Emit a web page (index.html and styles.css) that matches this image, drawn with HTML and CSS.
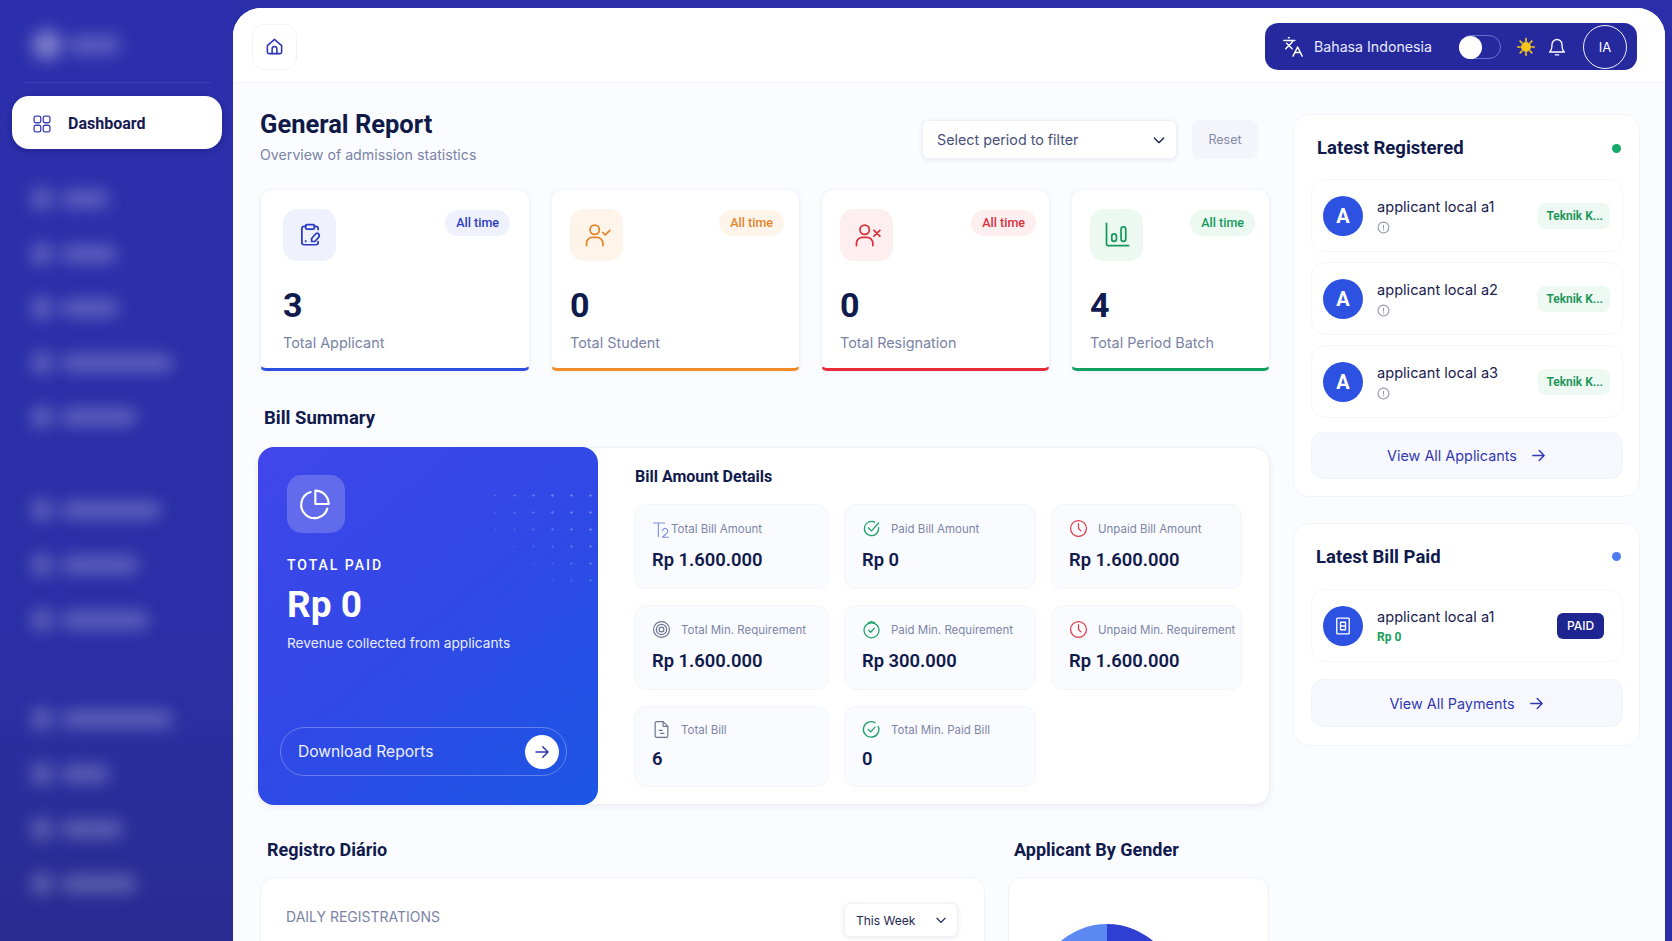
FILE: index.html
```html
<!DOCTYPE html>
<html lang="en">
<head>
<meta charset="utf-8">
<title>Dashboard</title>
<link rel="stylesheet" href="styles.css">
</head>
<body>
<svg class="sprite" aria-hidden="true">
  <symbol id="i-arrow" viewBox="0 0 24 24"><path d="M4 12h16M13 5l7 7-7 7"/></symbol>
  <symbol id="i-chev" viewBox="0 0 24 24"><path d="m5 9 7 7 7-7"/></symbol>
  <symbol id="i-info" viewBox="0 0 24 24"><circle cx="12" cy="12" r="10"/><path d="M12 8v5M12 16v.5"/></symbol>
  <symbol id="i-check" viewBox="0 0 24 24"><path d="M21 11v1a9 9 0 1 1-5-8"/><path d="m8 11 4 4 9-10"/></symbol>
  <symbol id="i-clock" viewBox="0 0 24 24"><circle cx="12" cy="12" r="10"/><path d="M12 6v6l3 3"/></symbol>
  <symbol id="i-badge" viewBox="0 0 24 24"><circle cx="12" cy="13" r="9.500"/><path d="M8 3.500 12 2l4 1.500"/><path d="m8.500 13 2.500 2.500 4.500-5"/></symbol>
  <symbol id="i-round" viewBox="0 0 24 24"><path d="M20.500 8a9.800 9.800 0 1 1-4-4.500"/><path d="m8 12 3 3 5.500-6"/></symbol>
</svg>

<aside class="sidebar">
  <div class="brand"><i class="blob blob-logo"></i><i class="blob blob-brandtext"></i></div>
  <div class="side-rule"></div>
  <a class="side-active">
    <svg class="ico-20" viewBox="0 0 24 24"><rect x="2.500" y="2.500" width="8" height="8" rx="2"/><rect x="13.500" y="2.500" width="8" height="8" rx="2"/><rect x="2.500" y="13.500" width="8" height="8" rx="2"/><rect x="13.500" y="13.500" width="8" height="8" rx="2"/></svg>
    <span>Dashboard</span>
  </a>
  <nav class="side-group first">
    <div class="side-item"><i class="blob blob-ic"></i><i class="blob b-w48"></i></div>
    <div class="side-item"><i class="blob blob-ic"></i><i class="blob b-w60"></i></div>
    <div class="side-item"><i class="blob blob-ic"></i><i class="blob b-w62"></i></div>
    <div class="side-item"><i class="blob blob-ic"></i><i class="blob b-w118"></i></div>
    <div class="side-item"><i class="blob blob-ic"></i><i class="blob b-w80"></i></div>
  </nav>
  <nav class="side-group second">
    <div class="side-item"><i class="blob blob-ic"></i><i class="blob b-w104"></i></div>
    <div class="side-item"><i class="blob blob-ic"></i><i class="blob b-w84"></i></div>
    <div class="side-item"><i class="blob blob-ic"></i><i class="blob b-w94"></i></div>
  </nav>
  <nav class="side-group third">
    <div class="side-item"><i class="blob blob-ic"></i><i class="blob b-w118"></i></div>
    <div class="side-item"><i class="blob blob-ic"></i><i class="blob b-w48"></i></div>
    <div class="side-item"><i class="blob blob-ic"></i><i class="blob b-w66"></i></div>
    <div class="side-item"><i class="blob blob-ic"></i><i class="blob b-w80"></i></div>
  </nav>
</aside>

<main class="main">
  <header class="topbar">
    <button class="home-btn" aria-label="Home">
      <svg class="ico-19 stroke-indigo" viewBox="0 0 24 24"><path d="M3 11 12 3l9 8v8a2 2 0 0 1-2 2H5a2 2 0 0 1-2-2z"/><path d="M9 21v-6a3 3 0 0 1 6 0v6"/></svg>
    </button>
    <div class="top-actions">
      <svg class="ico-22 stroke-white" viewBox="0 0 24 24"><path d="m5 8 6 6M4 14l6-6 2-3M2 5h12M7 2h1M22 22l-5-10-5 10M14 18h6"/></svg>
      <span class="lang">Bahasa Indonesia</span>
      <span class="toggle"><i class="knob"></i></span>
      <svg class="ico-20 sun" viewBox="0 0 24 24"><circle cx="12" cy="12" r="5"/><path d="M12 2v3M12 19v3M2 12h3M19 12h3M5 5l2 2M17 17l2 2M5 19l2-2M17 7l2-2"/></svg>
      <svg class="ico-20 stroke-white bell" viewBox="0 0 24 24"><path d="M6 9a6 6 0 0 1 12 0c0 7 3 9 3 9H3s3-2 3-9"/><path d="M10 21.500h4"/></svg>
      <span class="avatar-ring">IA</span>
    </div>
  </header>

  <div class="content">
    <div class="col-left">
      <div class="report-head">
        <div>
          <h1 class="report-title">General Report</h1>
          <p class="report-sub">Overview of admission statistics</p>
        </div>
        <div class="filters">
          <div class="select-period"><span>Select period to filter</span><svg class="ico-16 stroke-dark" viewBox="0 0 24 24"><use href="#i-chev"/></svg></div>
          <button class="reset">Reset</button>
        </div>
      </div>

      <section class="stats">
        <article class="stat stat-wide stat-blue">
          <div class="stat-top">
            <span class="stat-ico"><svg class="ico-26" viewBox="0 0 24 24"><path d="M16 4h1.500a2 2 0 0 1 2 2v1M8 4H6.500a2 2 0 0 0-2 2v13a2 2 0 0 0 2 2h11a2 2 0 0 0 2-2v-1"/><rect x="8" y="2.500" width="8" height="4" rx="1"/><path d="M19.500 10.500c1.200 1 1.200 2.700.2 4l-3.200 3.500h-3v-2.800l3.200-3.700c.8-1 1.900-1.600 2.800-1z"/><path d="M8 17.500v.5"/></svg></span>
            <span class="badge">All time</span>
          </div>
          <div class="stat-value">3</div>
          <div class="stat-label">Total Applicant</div>
        </article>
        <article class="stat stat-orange">
          <div class="stat-top">
            <span class="stat-ico"><svg class="ico-28" viewBox="0 0 24 24"><circle cx="10" cy="7.500" r="4"/><path d="M3 21v-2a5 5 0 0 1 5-5h4a5 5 0 0 1 5 5v2"/><path d="m17 10 2 2 4-4"/></svg></span>
            <span class="badge">All time</span>
          </div>
          <div class="stat-value">0</div>
          <div class="stat-label">Total Student</div>
        </article>
        <article class="stat stat-red">
          <div class="stat-top">
            <span class="stat-ico"><svg class="ico-28" viewBox="0 0 24 24"><circle cx="10" cy="7.500" r="4"/><path d="M3 21v-2a5 5 0 0 1 5-5h4a5 5 0 0 1 5 5v2"/><path d="m18 8 5 5M23 8l-5 5"/></svg></span>
            <span class="badge">All time</span>
          </div>
          <div class="stat-value">0</div>
          <div class="stat-label">Total Resignation</div>
        </article>
        <article class="stat stat-green">
          <div class="stat-top">
            <span class="stat-ico"><svg class="ico-28" viewBox="0 0 24 24"><path d="M3 2v18a1 1 0 0 0 1 1h18"/><rect x="7.500" y="11" width="4" height="6.500" rx="2"/><rect x="15.500" y="5" width="4" height="12.500" rx="2"/></svg></span>
            <span class="badge">All time</span>
          </div>
          <div class="stat-value">4</div>
          <div class="stat-label">Total Period Batch</div>
        </article>
      </section>

      <h2 class="section-title bill-title">Bill Summary</h2>
      <section class="bill-panel">
        <div class="paid-card">
          <div class="dots"></div>
          <span class="paid-ico"><svg class="ico-32 stroke-white" viewBox="0 0 24 24"><path d="M20.500 15.500A10 10 0 1 1 8 3"/><path d="M21.500 12A10 10 0 0 0 11.500 2v10z"/></svg></span>
          <div class="paid-label">TOTAL PAID</div>
          <div class="paid-value">Rp 0</div>
          <div class="paid-desc">Revenue collected from applicants</div>
          <div class="download">
            <span>Download Reports</span>
            <span class="download-arrow"><svg class="ico-18 stroke-indigo" viewBox="0 0 24 24"><use href="#i-arrow"/></svg></span>
          </div>
        </div>
        <div class="details">
          <h3 class="details-title">Bill Amount Details</h3>
          <div class="tiles">
            <div class="tile">
              <div class="tile-head tight"><svg class="ico-18 stroke-periwinkle" viewBox="0 0 24 24"><path d="M2 4h15M8.500 4v18"/><path d="M14 14.500a3.500 3.500 0 1 1 6.500 2L14 23h8"/></svg><span>Total Bill Amount</span></div>
              <div class="tile-value">Rp 1.600.000</div>
            </div>
            <div class="tile">
              <div class="tile-head"><svg class="ico-19 stroke-green" viewBox="0 0 24 24"><use href="#i-check"/></svg><span>Paid Bill Amount</span></div>
              <div class="tile-value">Rp 0</div>
            </div>
            <div class="tile">
              <div class="tile-head"><svg class="ico-19 stroke-red" viewBox="0 0 24 24"><use href="#i-clock"/></svg><span>Unpaid Bill Amount</span></div>
              <div class="tile-value">Rp 1.600.000</div>
            </div>
            <div class="tile">
              <div class="tile-head"><svg class="ico-19 stroke-slate" viewBox="0 0 24 24"><circle cx="12" cy="12" r="10"/><circle cx="12" cy="12" r="6.500"/><circle cx="12" cy="12" r="3"/></svg><span>Total Min. Requirement</span></div>
              <div class="tile-value">Rp 1.600.000</div>
            </div>
            <div class="tile">
              <div class="tile-head"><svg class="ico-19 stroke-green" viewBox="0 0 24 24"><use href="#i-badge"/></svg><span>Paid Min. Requirement</span></div>
              <div class="tile-value">Rp 300.000</div>
            </div>
            <div class="tile">
              <div class="tile-head"><svg class="ico-19 stroke-red" viewBox="0 0 24 24"><use href="#i-clock"/></svg><span>Unpaid Min. Requirement</span></div>
              <div class="tile-value">Rp 1.600.000</div>
            </div>
            <div class="tile tile-short">
              <div class="tile-head"><svg class="ico-19 stroke-slate" viewBox="0 0 24 24"><path d="M14 2H6a2 2 0 0 0-2 2v16a2 2 0 0 0 2 2h12a2 2 0 0 0 2-2V8z"/><path d="M14 2v6h6M9 13h4M11 17h4"/></svg><span>Total Bill</span></div>
              <div class="tile-value">6</div>
            </div>
            <div class="tile tile-short">
              <div class="tile-head"><svg class="ico-19 stroke-green" viewBox="0 0 24 24"><use href="#i-round"/></svg><span>Total Min. Paid Bill</span></div>
              <div class="tile-value">0</div>
            </div>
          </div>
        </div>
      </section>

      <div class="charts">
        <div>
          <h2 class="section-title chart-title-a">Registro Diário</h2>
          <div class="chart-card">
            <div class="chart-head">
              <span class="chart-label">DAILY REGISTRATIONS</span>
              <div class="select-week"><span>This Week</span><svg class="ico-14 stroke-dark" viewBox="0 0 24 24"><use href="#i-chev"/></svg></div>
            </div>
          </div>
        </div>
        <div>
          <h2 class="section-title chart-title-b">Applicant By Gender</h2>
          <div class="chart-card pie-card"><div class="pie"></div></div>
        </div>
      </div>
    </div>

    <aside class="col-right">
      <section class="side-card card-registered">
        <div class="side-card-head"><h2 class="side-card-title">Latest Registered</h2><i class="dot dot-green"></i></div>
        <div class="rows">
          <div class="row">
            <span class="row-avatar">A</span>
            <div class="row-text"><div class="row-name">applicant local a1</div><svg class="ico-13 stroke-muted" viewBox="0 0 24 24"><use href="#i-info"/></svg></div>
            <span class="tag">Teknik K...</span>
          </div>
          <div class="row">
            <span class="row-avatar">A</span>
            <div class="row-text"><div class="row-name">applicant local a2</div><svg class="ico-13 stroke-muted" viewBox="0 0 24 24"><use href="#i-info"/></svg></div>
            <span class="tag">Teknik K...</span>
          </div>
          <div class="row">
            <span class="row-avatar">A</span>
            <div class="row-text"><div class="row-name">applicant local a3</div><svg class="ico-13 stroke-muted" viewBox="0 0 24 24"><use href="#i-info"/></svg></div>
            <span class="tag">Teknik K...</span>
          </div>
        </div>
        <a class="view-all">View All Applicants<svg class="ico-17 stroke-indigo" viewBox="0 0 24 24"><use href="#i-arrow"/></svg></a>
      </section>
      <section class="side-card card-paid">
        <div class="side-card-head"><h2 class="side-card-title">Latest Bill Paid</h2><i class="dot dot-blue"></i></div>
        <div class="rows">
          <div class="row">
            <span class="row-avatar"><svg class="ico-20 stroke-white" viewBox="0 0 24 24"><rect x="4.500" y="2.500" width="15" height="19" rx="1"/><path d="M9 7.500h6v9H9zM9 12h6"/></svg></span>
            <div class="row-text"><div class="row-name">applicant local a1</div><div class="row-amount">Rp 0</div></div>
            <span class="paid-tag">PAID</span>
          </div>
        </div>
        <a class="view-all">View All Payments<svg class="ico-17 stroke-indigo" viewBox="0 0 24 24"><use href="#i-arrow"/></svg></a>
      </section>
    </aside>
  </div>
</main>
</body>
</html>
```
FILE: styles.css
```css
* { box-sizing: border-box; }
html, body { margin: 0; height: 100%; }
body {
  display: flex;
  height: 941px;
  overflow: hidden;
  background: #2a2fa9;
  font-family: Inter, "Liberation Sans", sans-serif;
  color: #101a4c;
}
h1, h2, h3, p { margin: 0; }
.side-active, .report-title, .stat-value, .section-title, .paid-value, .details-title,
.tile-value, .side-card-title, .row-avatar, .row-amount, .badge, .tag, .paid-label {
  font-family: Roboto, "Liberation Sans", sans-serif;
}
.sprite { display: none; }
svg { fill: none; stroke: currentColor; stroke-width: 2; stroke-linecap: round; stroke-linejoin: round; flex: none; display: block; }
.ico-13 { width: 13px; height: 13px; }
.ico-14 { width: 14px; height: 14px; }
.ico-16 { width: 16px; height: 16px; }
.ico-17 { width: 17px; height: 17px; }
.ico-18 { width: 18px; height: 18px; }
.ico-19 { width: 19px; height: 19px; }
.ico-20 { width: 20px; height: 20px; }
.ico-22 { width: 22px; height: 22px; }
.ico-26 { width: 26px; height: 26px; stroke-width: 1.6; }
.ico-28 { width: 28px; height: 28px; stroke-width: 1.5; }
.ico-32 { width: 32px; height: 32px; stroke-width: 1.2; }
.stroke-indigo { color: #3137b5; }
.stroke-white { color: #fff; stroke-width: 1.6; }
.stroke-dark { color: #1d2450; }
.stroke-green { color: #18a262; stroke-width: 1.6; }
.stroke-red { color: #de3b47; stroke-width: 1.6; }
.stroke-slate { color: #6e7592; stroke-width: 1.5; }
.stroke-periwinkle { color: #7f8fdc; stroke-width: 1.5; }
.stroke-muted { color: #9097b0; }

/* Sidebar */
.sidebar { width: 233px; flex: none; height: 100%; background: linear-gradient(180deg, #2c2fac 0%, #2a2fa6 70%, #282c90 100%); }
.brand { display: flex; align-items: center; gap: 6px; height: 36px; margin: 27px 0 0 32px; }
.blob { display: block; background: rgba(255, 255, 255, .24); filter: blur(8px); border-radius: 8px; height: 18px; }
.blob-logo { width: 30px; height: 30px; border-radius: 50%; background: rgba(255, 255, 255, .38); }
.blob-brandtext { width: 52px; }
.side-rule { height: 1px; margin: 19px 22px 0; background: rgba(255, 255, 255, .07); }
.side-active {
  display: flex; align-items: center; gap: 16px;
  width: 210px; height: 53px; margin: 13px 0 0 12px; padding: 2px 0 0 20px;
  background: #fff; border-radius: 17px;
  color: #15194f; font-size: 16px; font-weight: 700;
  box-shadow: 0 2px 6px rgba(10, 12, 80, .3);
}
.side-active svg { color: #3d43b6; stroke-width: 1.6; }
.side-group { display: flex; flex-direction: column; gap: 34.500px; padding-left: 31px; }
.side-group.first { margin-top: 40px; }
.side-group.second { margin-top: 73px; gap: 35px; }
.side-group.third { margin-top: 79px; gap: 35px; }
.side-item { display: flex; align-items: center; gap: 8px; height: 20px; }
.blob-ic { width: 22px; height: 22px; }
.b-w48 { width: 48px; }
.b-w60 { width: 56px; }
.b-w62 { width: 58px; }
.b-w66 { width: 62px; }
.b-w80 { width: 76px; }
.b-w84 { width: 78px; }
.b-w94 { width: 88px; }
.b-w104 { width: 100px; }
.b-w118 { width: 112px; }

/* Main shell */
.main {
  flex: none; width: 1432px; height: 933px; margin-top: 8px;
  background: #fbfcff; border-radius: 28px 28px 0 0;
  overflow: hidden;
}
.topbar {
  display: flex; align-items: center; justify-content: space-between;
  height: 75px; padding: 3px 28px 0 19px;
  background: #fff; border-bottom: 1px solid #f2f4f9;
}
.home-btn {
  display: flex; align-items: center; justify-content: center;
  width: 45px; height: 46px; padding: 0;
  background: #fff; border: 1px solid #f1f3f8; border-radius: 12px;
}
.top-actions {
  display: flex; align-items: center;
  width: 372px; height: 47px; padding-left: 17px;
  background: #25299d; border-radius: 13px; color: #e8eaff;
}
.lang { margin-left: 10px; font-size: 14.200px; width: 135px; }
.toggle {
  display: block; width: 42px; height: 24px; margin-left: 10px;
  border: 1px solid #6a6fd0; border-radius: 12px;
}
.knob { display: block; width: 23px; height: 23px; margin-left: -1px; background: #fff; border-radius: 50%; }
.sun { margin-left: 15px; color: #f2c41c; fill: none; stroke-width: 2; }
.sun circle { fill: #f5c518; }
.bell { margin-left: 11px; }
.avatar-ring {
  display: flex; align-items: center; justify-content: center;
  width: 44px; height: 44px; margin-left: 16px;
  border: 1.5px solid #f0f1ff; border-radius: 50%;
  color: #fff; font-size: 13px;
}

.content { display: flex; gap: 23px; padding: 27px 0 0 27px; }
.col-left { width: 1010px; flex: none; }
.col-right { width: 347px; flex: none; margin-top: 4px; display: flex; flex-direction: column; gap: 26px; }

.report-head { display: flex; justify-content: space-between; height: 79px; padding-right: 12px; }
.report-title { font-size: 25.500px; font-weight: 700; line-height: 28px; color: #0f1a48; }
.report-sub { margin-top: 7px; font-size: 14.200px; line-height: 20px; color: #7a83a6; }
.filters { display: flex; gap: 15px; margin-top: 10px; height: 39px; }
.select-period {
  display: flex; align-items: center; justify-content: space-between;
  width: 255px; padding: 0 9px 0 14px;
  background: #fff; border: 1px solid #eff1f7; border-radius: 7px;
  box-shadow: 0 1px 4px rgba(30, 40, 90, .1);
  font-size: 14.300px; color: #49517a;
}
.reset {
  width: 66px; background: #f4f5fa; border: 0; border-radius: 8px;
  font: inherit; font-size: 12.500px; color: #8289a8;
}

.stats { display: grid; grid-template-columns: 270px 249px 229px 199px; gap: 21px; width: 1012px; }
.stat {
  height: 182px; padding: 19px 14px 0 18px;
  background: #fff; border-radius: 12px 12px 6px 6px;
  border: 1px solid #f2f4f9; border-bottom: 3.500px solid;
  box-shadow: 0 1px 4px rgba(30, 40, 90, .06);
}
.stat-wide { padding-left: 22px; padding-right: 19px; }
.stat-top { display: flex; justify-content: space-between; align-items: flex-start; }
.stat-ico { display: flex; align-items: center; justify-content: center; width: 53px; height: 52px; border-radius: 14px; }
.badge { margin-top: 1px; padding: 0 11px; height: 26px; line-height: 26px; border-radius: 13px; font-size: 12.500px; font-weight: 500; }
.stat-orange .badge { margin-right: 1px; }
.stat-value { margin-top: 24px; font-size: 34px; font-weight: 700; line-height: 40px; color: #0f1a4d; }
.stat-label { margin-top: 8px; font-size: 14.400px; line-height: 20px; color: #7a83a6; }
.stat-blue { border-bottom-color: #2e50e0; }
.stat-blue .stat-ico, .stat-blue .badge { background: #eff1fc; }
.stat-blue svg, .stat-blue .badge { color: #2c3bc4; }
.stat-orange { border-bottom-color: #f28c28; }
.stat-orange .stat-ico, .stat-orange .badge { background: #fef4e9; }
.stat-orange svg, .stat-orange .badge { color: #e5852a; }
.stat-red { border-bottom-color: #ea2b38; padding-right: 13px; }
.stat-red .stat-ico, .stat-red .badge { background: #fdeff0; }
.stat-red svg, .stat-red .badge { color: #d9303d; }
.stat-green { border-bottom-color: #10a061; }
.stat-green .stat-ico, .stat-green .badge { background: #ebf9f1; }
.stat-green svg, .stat-green .badge { color: #16985c; }

.section-title { font-size: 18px; font-weight: 700; line-height: 24px; color: #101a4c; }
.bill-title { margin: 35px 0 17px 4px; font-size: 18.500px; }
.bill-panel {
  display: flex; height: 358px; margin-left: -2px; width: 1012px;
  background: #fff; border: 1px solid #eff1f7; border-radius: 16px;
  box-shadow: 0 2px 6px rgba(30, 40, 90, .07);
}
.paid-card {
  position: relative;
  width: 340px; height: 358px; margin: -1px 0 0 -1px; padding: 28px 0 0 29px;
  border-radius: 16px; color: #fff; flex: none;
  background: linear-gradient(140deg, #4146ea 0%, #3049e6 50%, #1c56e4 100%);
}
.dots {
  position: absolute; top: 40px; right: 6px; width: 106px; height: 96px;
  background-image: radial-gradient(circle, rgba(255, 255, 255, .28) 1px, transparent 1.400px);
  background-size: 19px 17px;
  mask-image: linear-gradient(45deg, transparent 20%, #000 75%);
}
.paid-ico { display: flex; align-items: center; justify-content: center; width: 58px; height: 58px; background: rgba(255, 255, 255, .2); border-radius: 15px; }
.paid-label { margin-top: 22px; font-size: 14px; font-weight: 500; letter-spacing: 2px; line-height: 20px; }
.paid-value { margin-top: 8px; font-size: 37px; font-weight: 700; line-height: 44px; }
.paid-desc { margin-top: 6px; font-size: 13.700px; line-height: 20px; color: #e9ecff; }
.download {
  display: flex; align-items: center; justify-content: space-between;
  width: 287px; height: 49px; margin: 74px 0 0 -7px; padding: 0 7px 0 17px;
  border: 1px solid rgba(255, 255, 255, .28); border-radius: 25px;
  font-size: 15.600px; color: #eef0ff;
}
.download-arrow { display: flex; align-items: center; justify-content: center; width: 34px; height: 34px; background: #fff; border-radius: 50%; }
.details { flex: 1; padding: 19px 0 0 36px; }
.details-title { margin-left: 1px; font-size: 16px; font-weight: 700; line-height: 20px; color: #101a4c; }
.tiles { display: grid; grid-template-columns: 195px 192px 191px; grid-auto-rows: 85px; gap: 16px 15px; margin-top: 17px; }
.tile {
  padding: 14px 0 0 17px;
  background: #fafbfe; border: 1px solid #f4f5fa; border-radius: 12px;
}
.tile-short { height: 81px; padding-top: 13px; }
.tile-head { display: flex; align-items: center; gap: 10px; height: 19px; font-size: 11.500px; color: #7d86a8; white-space: nowrap; }
.tile-head.tight { gap: 1px; }
.tile-value { margin-top: 10px; font-size: 18.400px; font-weight: 600; line-height: 24px; color: #101a4c; }
.tile-short .tile-value { margin-top: 8px; }

.charts { display: grid; grid-template-columns: 725px 261px; gap: 23px; }
.chart-title-a { margin: 32px 0 14px 7px; line-height: 26px; }
.chart-title-b { margin: 32px 0 14px 6px; line-height: 26px; }
.chart-card { height: 300px; background: #fff; border: 1px solid #f0f2f8; border-radius: 14px; }
.chart-head { display: flex; justify-content: space-between; padding: 25px 26px 0 25px; }
.chart-label { font-size: 14px; line-height: 27px; color: #7a83a6; }
.select-week {
  display: flex; align-items: center; justify-content: space-between;
  width: 114px; height: 34px; padding: 0 9px 0 11px;
  background: #fff; border: 1px solid #f0f2f8; border-radius: 6px;
  box-shadow: 0 1px 4px rgba(30, 40, 90, .1);
  font-size: 12px; color: #1e2550;
}
.pie-card { padding-top: 46px; }
.pie {
  width: 142px; height: 142px; margin-left: 27px; border-radius: 50%;
  background: linear-gradient(90deg, #5c88f2 50%, #2f3fd2 50%);
}

/* Right column */
.side-card { background: #fff; border: 1px solid #f2f4f9; border-radius: 16px; padding: 0 16px 0 17px; }
.card-registered { height: 383px; }
.card-paid { height: 223px; }
.side-card-head { display: flex; align-items: center; justify-content: space-between; height: 64px; padding: 2px 2px 0 6px; }
.card-paid .side-card-head { height: 65px; padding: 0 2px 0 5px; }
.side-card-title { font-size: 18.500px; font-weight: 700; color: #101a4c; }
.dot { display: block; width: 9px; height: 9px; border-radius: 50%; }
.dot-green { background: #14aa6c; }
.dot-blue { background: #4a7cf0; }
.rows { display: flex; flex-direction: column; gap: 10px; }
.row {
  display: flex; align-items: center;
  height: 73px; padding: 0 12px 0 11px;
  background: #fff; border: 1px solid #f5f6fa; border-radius: 14px;
}
.row-avatar {
  display: flex; align-items: center; justify-content: center;
  width: 40px; height: 40px; flex: none; border-radius: 50%;
  background: #2d52e2; color: #fff; font-size: 20px; font-weight: 700;
}
.row-text { flex: 1; margin-left: 14px; }
.card-registered .row-text { padding-bottom: 2px; }
.row-name { font-size: 14.600px; line-height: 22px; color: #1a2150; margin-bottom: 3px; }
.row-amount { font-size: 12px; font-weight: 700; line-height: 16px; color: #1b9f5d; margin-top: -2px; }
.tag {
  height: 26px; padding: 0 7px 0 8px; line-height: 26px;
  background: #edf9f2; border-radius: 7px;
  color: #199456; font-size: 12px; font-weight: 600; white-space: nowrap;
}
.paid-tag {
  height: 26px; width: 47px; margin-right: 6px; line-height: 26px; text-align: center;
  background: #1e2590; border-radius: 6px; color: #fff; font-size: 12px; font-weight: 500;
}
.view-all {
  display: flex; align-items: center; justify-content: center; gap: 13px;
  height: 47px; margin-top: 14px;
  background: #f7f8fd; border: 1px solid #f2f4f9; border-radius: 12px;
  color: #3238b0; font-size: 14.400px;
}
.card-paid .view-all { margin-top: 17px; height: 48px; }
```
